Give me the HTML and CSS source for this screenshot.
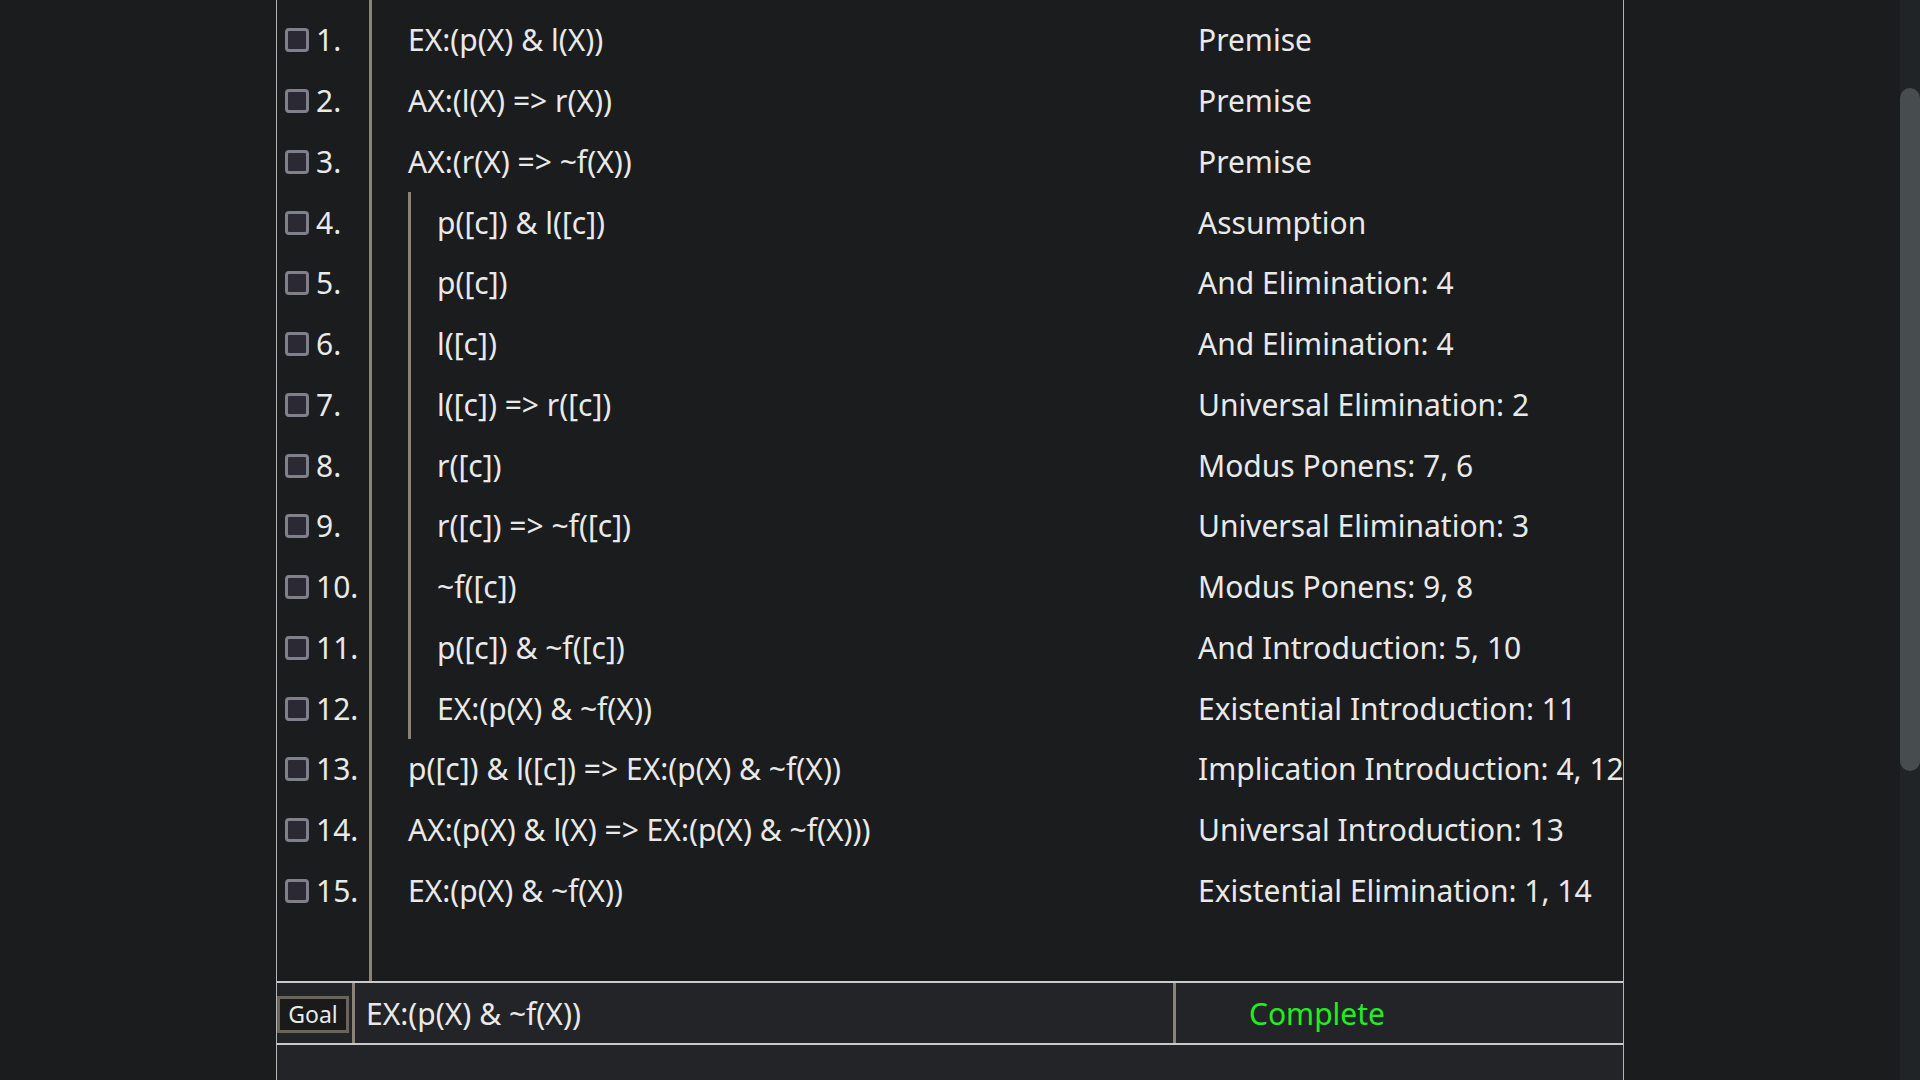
FILE: index.html
```html
<!DOCTYPE html>
<html lang="en">
<head>
<meta charset="utf-8">
<title>Proof</title>
<link rel="stylesheet" href="styles.css">
</head>
<body>
<div class="viewport">
  <div class="panel">
    <div class="proof">
      <div class="gutter">
        <div class="num-row"><span class="box"></span><span class="num">1.</span></div>
        <div class="num-row"><span class="box"></span><span class="num">2.</span></div>
        <div class="num-row"><span class="box"></span><span class="num">3.</span></div>
        <div class="num-row"><span class="box"></span><span class="num">4.</span></div>
        <div class="num-row"><span class="box"></span><span class="num">5.</span></div>
        <div class="num-row"><span class="box"></span><span class="num">6.</span></div>
        <div class="num-row"><span class="box"></span><span class="num">7.</span></div>
        <div class="num-row"><span class="box"></span><span class="num">8.</span></div>
        <div class="num-row"><span class="box"></span><span class="num">9.</span></div>
        <div class="num-row"><span class="box"></span><span class="num">10.</span></div>
        <div class="num-row"><span class="box"></span><span class="num">11.</span></div>
        <div class="num-row"><span class="box"></span><span class="num">12.</span></div>
        <div class="num-row"><span class="box"></span><span class="num">13.</span></div>
        <div class="num-row"><span class="box"></span><span class="num">14.</span></div>
        <div class="num-row"><span class="box"></span><span class="num">15.</span></div>
      </div>
      <div class="lines">
        <div class="formulas">
          <div class="row">EX:(p(X) &amp; l(X))</div>
          <div class="row">AX:(l(X) =&gt; r(X))</div>
          <div class="row">AX:(r(X) =&gt; ~f(X))</div>
          <div class="subproof">
            <div class="row">p([c]) &amp; l([c])</div>
            <div class="row">p([c])</div>
            <div class="row">l([c])</div>
            <div class="row">l([c]) =&gt; r([c])</div>
            <div class="row">r([c])</div>
            <div class="row">r([c]) =&gt; ~f([c])</div>
            <div class="row">~f([c])</div>
            <div class="row">p([c]) &amp; ~f([c])</div>
            <div class="row">EX:(p(X) &amp; ~f(X))</div>
          </div>
          <div class="row">p([c]) &amp; l([c]) =&gt; EX:(p(X) &amp; ~f(X))</div>
          <div class="row">AX:(p(X) &amp; l(X) =&gt; EX:(p(X) &amp; ~f(X)))</div>
          <div class="row">EX:(p(X) &amp; ~f(X))</div>
        </div>
        <div class="reasons">
          <div class="row">Premise</div>
          <div class="row">Premise</div>
          <div class="row">Premise</div>
          <div class="row">Assumption</div>
          <div class="row">And Elimination: 4</div>
          <div class="row">And Elimination: 4</div>
          <div class="row">Universal Elimination: 2</div>
          <div class="row">Modus Ponens: 7, 6</div>
          <div class="row">Universal Elimination: 3</div>
          <div class="row">Modus Ponens: 9, 8</div>
          <div class="row">And Introduction: 5, 10</div>
          <div class="row">Existential Introduction: 11</div>
          <div class="row">Implication Introduction: 4, 12</div>
          <div class="row">Universal Introduction: 13</div>
          <div class="row">Existential Elimination: 1, 14</div>
        </div>
      </div>
    </div>
    <div class="goal-bar">
      <div class="goal-label-cell"><span class="goal-btn">Goal</span></div>
      <div class="goal-formula">EX:(p(X) &amp; ~f(X))</div>
      <div class="goal-status">Complete</div>
    </div>
    <div class="panel-rest"></div>
  </div>
</div>
<div class="scrollbar"><div class="thumb"></div></div>
</body>
</html>
```
FILE: styles.css
```css
html, body {
  margin: 0;
  padding: 0;
  height: 100%;
  overflow: hidden;
}
body {
  display: flex;
  background: #1b1c1e;
  color: #e9e9e9;
  font-family: "Noto Sans", "Open Sans", sans-serif;
  font-size: 30px;
}
.viewport {
  flex: 1;
  display: flex;
  justify-content: center;
  height: 100%;
}
.panel {
  width: 1346px;
  border-left: 1px solid #b4b4b4;
  border-right: 1px solid #b4b4b4;
  display: flex;
  flex-direction: column;
  height: 100%;
}
.proof {
  height: 981px;
  display: flex;
  flex-shrink: 0;
}
.gutter {
  width: 92px;
  padding-top: 9.5px;
  box-sizing: border-box;
}
.num-row {
  height: 60.75px;
  display: flex;
  align-items: center;
  padding-left: 8px;
  white-space: nowrap;
}
.box {
  width: 24px;
  height: 24px;
  box-sizing: border-box;
  border: 3px solid #807f8a;
  border-radius: 4px;
  background: #2b2a34;
  margin-right: 7px;
  margin-top: 1px;
}
.lines {
  flex: 1;
  display: flex;
  border-left: 3px solid #8b8378;
  padding-top: 9.5px;
  min-width: 0;
}
.formulas {
  width: 826px;
  padding-left: 36px;
  box-sizing: border-box;
  flex-shrink: 0;
}
.row {
  height: 60.75px;
  display: flex;
  align-items: center;
  white-space: nowrap;
}
.subproof {
  border-left: 3px solid #8b8378;
  padding-left: 26px;
}
.reasons {
  flex: 1;
  min-width: 0;
}
.goal-bar {
  height: 60px;
  flex-shrink: 0;
  border-top: 2px solid #cacaca;
  border-bottom: 2px solid #cacaca;
  background: #232427;
  display: flex;
}
.goal-label-cell {
  width: 75px;
  display: flex;
  align-items: center;
  border-right: 3px solid #8b8378;
}
.goal-btn {
  display: block;
  width: 72px;
  height: 37px;
  box-sizing: border-box;
  border: 3px solid #6a645b;
  background: #1a1a1b;
  font-size: 23px;
  line-height: 31px;
  text-align: center;
  margin-top: 2px;
}
.goal-formula {
  width: 807px;
  border-right: 3px solid #8b8378;
  padding-left: 11px;
  display: flex;
  align-items: center;
}
.goal-status {
  flex: 1;
  padding-left: 73px;
  display: flex;
  align-items: center;
  color: #20ee20;
}
.panel-rest {
  flex: 1;
  background: #232427;
}
.scrollbar {
  width: 20px;
  flex-shrink: 0;
  height: 100%;
  background: #212426;
  padding-top: 88px;
  box-sizing: border-box;
}
.thumb {
  height: 683px;
  background: #474c4f;
  border-radius: 10px;
}
```
